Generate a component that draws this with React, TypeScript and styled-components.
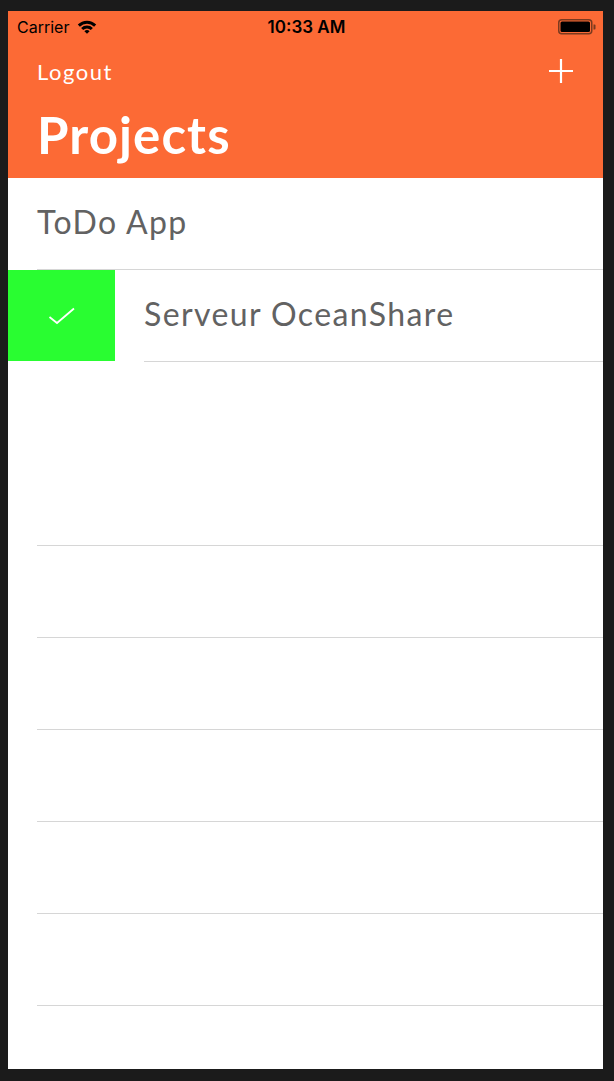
import React from "react";
import styled, { createGlobalStyle } from "styled-components";

const GlobalStyle = createGlobalStyle`
  html, body {
    margin: 0;
    padding: 0;
    background: #1b1b1b;
  }
  * { box-sizing: border-box; }
`;

const Frame = styled.div`
  width: 614px;
  height: 1081px;
  padding: 11px 11px 12px 8px;
  background: #1b1b1b;
`;

const Screen = styled.div`
  width: 595px;
  height: 1058px;
  background: #ffffff;
  overflow: hidden;
  display: flex;
  flex-direction: column;
`;

const Header = styled.header`
  background: #fc6a35;
  color: #ffffff;
  display: flex;
  flex-direction: column;
`;

const StatusBar = styled.div`
  height: 32px;
  display: grid;
  grid-template-columns: 1fr auto 1fr;
  align-items: center;
  padding: 0 7px 0 9px;
  color: #000000;
  font-family: Inter, "Liberation Sans", sans-serif;
`;

const StatusLeft = styled.div`
  display: flex;
  align-items: center;
  gap: 8px;
  font-size: 16px;
  font-weight: 400;
`;

const StatusTime = styled.div`
  font-size: 17px;
  font-weight: 600;
`;

const StatusRight = styled.div`
  display: flex;
  justify-content: flex-end;
  align-items: center;
`;

const NavRow = styled.div`
  height: 56px;
  display: flex;
  align-items: center;
  justify-content: space-between;
  padding: 0 29px 0 29px;
  font-family: Lato, "Open Sans", sans-serif;
`;

const NavButton = styled.span`
  font-size: 22px;
  font-weight: 400;
  letter-spacing: 1.5px;
  color: #ffffff;
`;

const LargeTitle = styled.h1`
  margin: 6px 0 13px;
  padding: 0 29px;
  height: 60px;
  line-height: 60px;
  font-family: Lato, "Open Sans", sans-serif;
  font-size: 51px;
  font-weight: 700;
  letter-spacing: 1.1px;
  color: #ffffff;
`;

const List = styled.div`
  display: flex;
  flex-direction: column;
  font-family: Lato, "Open Sans", sans-serif;
`;

const Row = styled.div`
  height: 92px;
  display: flex;
`;

const SwipeAction = styled.div`
  width: 107px;
  height: 91px;
  background: #29fd31;
  display: flex;
  align-items: center;
  justify-content: center;
  flex-shrink: 0;
`;

const CellBody = styled.div<{ $separator: boolean }>`
  flex: 1;
  margin-left: 29px;
  display: flex;
  align-items: center;
  padding-bottom: 4px;
  border-bottom: 1px solid ${(p) => (p.$separator ? "#d6d6d6" : "transparent")};
  font-size: 32px;
  font-weight: 400;
  letter-spacing: 1.4px;
  color: #626262;
`;

const WifiIcon = () => (
  <svg width="20" height="14" viewBox="0 0 20 14">
    <path
      d="M0.8 4.6 A13 13 0 0 1 19.2 4.6 L17.1 6.7 A10 10 0 0 0 2.9 6.7 Z"
      fill="#000"
    />
    <path
      d="M4.1 7.9 A8.4 8.4 0 0 1 15.9 7.9 L13.8 10 A5.4 5.4 0 0 0 6.2 10 Z"
      fill="#000"
    />
    <path d="M7.4 11.2 A3.7 3.7 0 0 1 12.6 11.2 L10 13.8 Z" fill="#000" />
  </svg>
);

const BatteryIcon = () => (
  <svg width="38" height="16" viewBox="0 0 38 16">
    <rect x="0.75" y="0.75" width="33" height="14" rx="3" fill="none" stroke="#7a3a1f" strokeWidth="1.5" />
    <rect x="2.5" y="2.5" width="29.5" height="10.5" rx="1.5" fill="#000" />
    <path d="M35.5 5.5 h1 a1 1 0 0 1 1 1 v3 a1 1 0 0 1 -1 1 h-1 Z" fill="#7a3a1f" />
  </svg>
);

const PlusIcon = () => (
  <svg width="26" height="26" viewBox="0 0 26 26">
    <path d="M13 1 V25 M1 13 H25" stroke="#fff" strokeWidth="2.2" />
  </svg>
);

const CheckIcon = () => (
  <svg width="28" height="18" viewBox="0 0 28 18">
    <polyline
      points="1.5,10 9,16 26,1.5"
      fill="none"
      stroke="#ffffff"
      strokeWidth="1.8"
    />
  </svg>
);

const emptyRows = [false, true, true, true, true, true, true, false];

export default function App() {
  return (
    <>
      <GlobalStyle />
      <Frame>
        <Screen>
          <Header>
            <StatusBar>
              <StatusLeft>
                <span>Carrier</span>
                <WifiIcon />
              </StatusLeft>
              <StatusTime>10:33 AM</StatusTime>
              <StatusRight>
                <BatteryIcon />
              </StatusRight>
            </StatusBar>
            <NavRow>
              <NavButton>Logout</NavButton>
              <PlusIcon />
            </NavRow>
            <LargeTitle>Projects</LargeTitle>
          </Header>
          <List>
            <Row>
              <CellBody $separator>ToDo App</CellBody>
            </Row>
            <Row>
              <SwipeAction>
                <CheckIcon />
              </SwipeAction>
              <CellBody $separator>Serveur OceanShare</CellBody>
            </Row>
            {emptyRows.map((sep, i) => (
              <Row key={i}>
                <CellBody $separator={sep} />
              </Row>
            ))}
          </List>
        </Screen>
      </Frame>
    </>
  );
}
